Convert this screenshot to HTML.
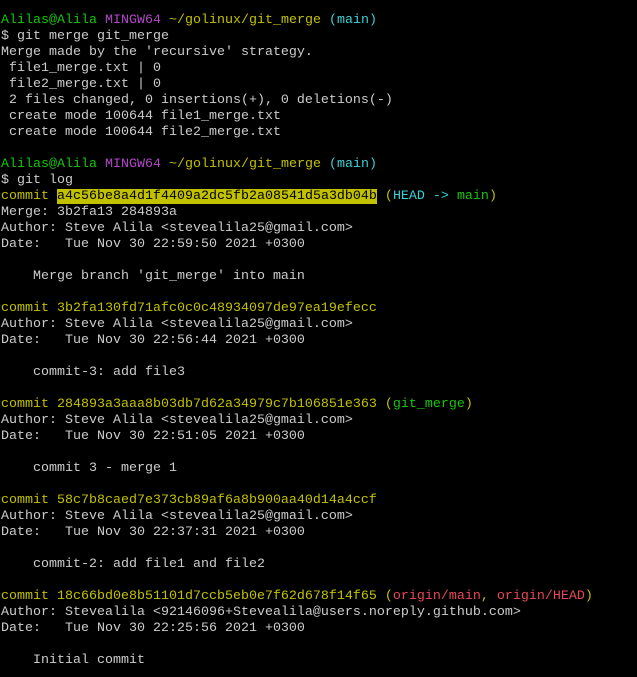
<!DOCTYPE html><html><head><style>
body{margin:0;background:#000;width:637px;height:677px;overflow:hidden}
pre{margin:0;padding:13px 0 0 1px;font-family:"Liberation Mono",monospace;font-size:13.33px;line-height:16px;color:#cccccc;white-space:pre}
.g{color:#16c60c}.p{color:#b148c6}.y{color:#c1c100}.c{color:#3ad0d8}.r{color:#e74856}
.h{background:#c1c100;color:#000}
</style></head><body><pre><span class="g">Alilas@Alila</span> <span class="p">MINGW64</span> <span class="y">~/golinux/git_merge</span> <span class="c">(main)</span>
$ git merge git_merge
Merge made by the 'recursive' strategy.
 file1_merge.txt | 0
 file2_merge.txt | 0
 2 files changed, 0 insertions(+), 0 deletions(-)
 create mode 100644 file1_merge.txt
 create mode 100644 file2_merge.txt

<span class="g">Alilas@Alila</span> <span class="p">MINGW64</span> <span class="y">~/golinux/git_merge</span> <span class="c">(main)</span>
$ git log
<span class="y">commit <span class="h">a4c56be8a4d1f4409a2dc5fb2a08541d5a3db04b</span> (<span class="c">HEAD -&gt; </span><span class="g">main</span>)</span>
Merge: 3b2fa13 284893a
Author: Steve Alila &lt;stevealila25@gmail.com&gt;
Date:   Tue Nov 30 22:59:50 2021 +0300

    Merge branch 'git_merge' into main

<span class="y">commit 3b2fa130fd71afc0c0c48934097de97ea19efecc</span>
Author: Steve Alila &lt;stevealila25@gmail.com&gt;
Date:   Tue Nov 30 22:56:44 2021 +0300

    commit-3: add file3

<span class="y">commit 284893a3aaa8b03db7d62a34979c7b106851e363 (<span class="g">git_merge</span>)</span>
Author: Steve Alila &lt;stevealila25@gmail.com&gt;
Date:   Tue Nov 30 22:51:05 2021 +0300

    commit 3 - merge 1

<span class="y">commit 58c7b8caed7e373cb89af6a8b900aa40d14a4ccf</span>
Author: Steve Alila &lt;stevealila25@gmail.com&gt;
Date:   Tue Nov 30 22:37:31 2021 +0300

    commit-2: add file1 and file2

<span class="y">commit 18c66bd0e8b51101d7ccb5eb0e7f62d678f14f65 (<span class="r">origin/main</span>, <span class="r">origin/HEAD</span>)</span>
Author: Stevealila &lt;92146096+Stevealila@users.noreply.github.com&gt;
Date:   Tue Nov 30 22:25:56 2021 +0300

    Initial commit
</pre></body></html>
